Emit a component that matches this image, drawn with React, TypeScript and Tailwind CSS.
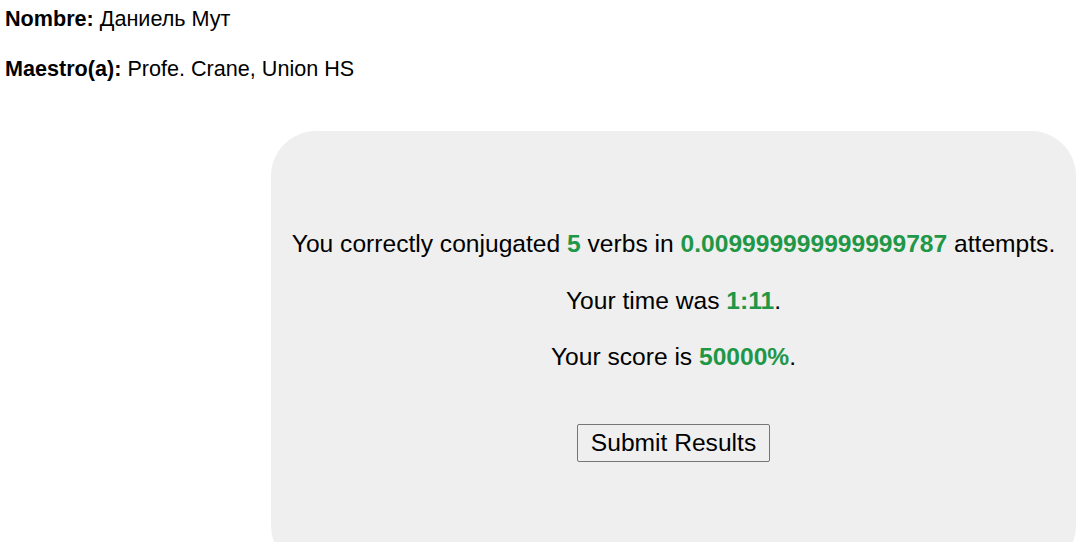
import React from 'react';

const Green = ({ children }: { children: React.ReactNode }) => (
  <strong className="font-bold text-[#1f9747]">{children}</strong>
);

export default function App() {
  return (
    <div className="h-screen overflow-hidden bg-white font-['Liberation_Sans',Arial,sans-serif] text-black">
      <div className="flex flex-col gap-[25px] px-[5px] pt-[6px] text-[21.6px] leading-[25px]">
        <p>
          <strong className="font-bold">Nombre:</strong> Даниель Мут
        </p>
        <p>
          <strong className="font-bold">Maestro(a):</strong> Profe. Crane, Union HS
        </p>
      </div>

      <div className="ml-[271px] mr-[4px] mt-[50px] h-[440px] rounded-[45px] bg-[#efefef] pt-[98px] text-center text-[24.6px] leading-[30px]">
        <div className="flex flex-col gap-[26.5px]">
          <p>
            You correctly conjugated <Green>5</Green> verbs in <Green>0.009999999999999787</Green> attempts.
          </p>
          <p>
            Your time was <Green>1:11</Green>.
          </p>
          <p>
            Your score is <Green>50000%</Green>.
          </p>
        </div>
        <button className="mt-[52px] h-[38px] rounded-[2px] border border-[#767676] bg-[#efefef] px-[13px] text-[24.6px] leading-[28px] text-black">
          Submit Results
        </button>
      </div>
    </div>
  );
}
